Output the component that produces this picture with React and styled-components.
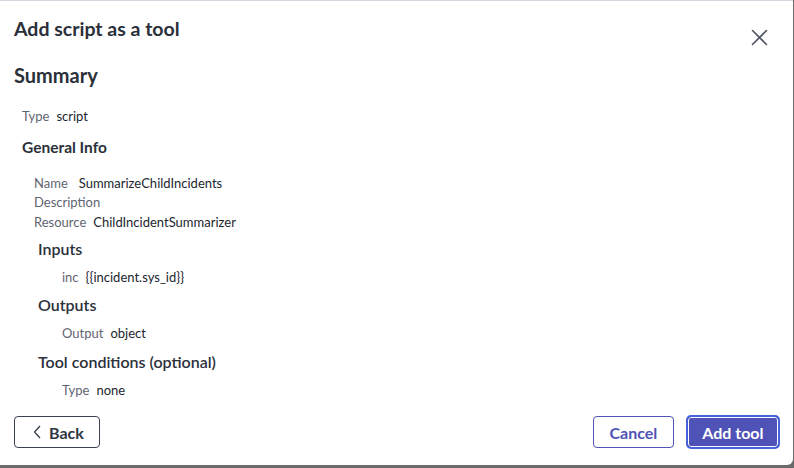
import React from "react";
import styled, { createGlobalStyle } from "styled-components";

const Global = createGlobalStyle`
  html, body { margin: 0; padding: 0; background: #6b6b6b; }
  body { font-family: Lato, "Noto Sans", sans-serif; }
  * { box-sizing: border-box; }
`;

const Backdrop = styled.div`
  width: 794px;
  height: 468px;
  background: #6b6b6b;
`;

const Dialog = styled.div`
  width: 793px;
  height: 465px;
  background: #fff;
  border-top: 1px solid #d3d6de;
  border-radius: 0 0 6px 0;
  display: flex;
  flex-direction: column;
  color: #2b303b;
`;

const Header = styled.div`
  display: flex;
  align-items: center;
  justify-content: space-between;
  padding: 13px 24px 0 14px;
  height: 41px;
`;

const Title = styled.h1`
  margin: 0;
  font-size: 19.5px;
  font-weight: 700;
  color: #2b303b;
`;

const CloseButton = styled.button`
  border: 0;
  background: none;
  padding: 0;
  width: 20px;
  height: 20px;
  display: flex;
  align-items: center;
  justify-content: center;
  margin-top: 18px;
  color: #4d5361;
`;

const Body = styled.div`
  flex: 1;
  padding: 0 14px;
`;

const Heading = styled.h2`
  margin: ${(p) => p.$mt || 0}px 0 0 ${(p) => p.$indent || 0}px;
  font-size: ${(p) => p.$size || 16}px;
  font-weight: ${(p) => p.$weight || 700};
  color: #2b303b;
  line-height: ${(p) => p.$lh || 20}px;
`;

const Row = styled.div`
  display: flex;
  gap: 7px;
  font-size: 13px;
  line-height: 19.5px;
  margin: ${(p) => p.$mt || 0}px 0 0 ${(p) => p.$indent || 0}px;
`;

const Label = styled.span`
  color: #5f6572;
  margin-right: ${(p) => p.$extra || 0}px;
`;

const Value = styled.span`
  color: #22262e;
`;

const Footer = styled.div`
  display: flex;
  align-items: center;
  padding: 0 14px 17px 14px;
  gap: 13px;
`;

const Spacer = styled.div`
  flex: 1;
`;

const Button = styled.button`
  font-family: Lato, "Noto Sans", sans-serif;
  font-size: 16px;
  font-weight: 700;
  height: 32px;
  border-radius: 4px;
  padding: 0 ${(p) => p.$pr || 15}px 0 ${(p) => p.$pl || 15}px;
  display: flex;
  align-items: center;
  gap: 7px;
  cursor: pointer;
  ${(p) =>
    p.$variant === "primary"
      ? `background: #4f52b6; color: #fff; border: 1px solid #4f52b6; box-shadow: inset 0 0 0 1px #fff; outline: 2px solid #4763dc; outline-offset: -1px;`
      : p.$variant === "secondary"
      ? `background: #fff; color: #4f52b6; border: 1px solid #4f52b6;`
      : `background: #fff; color: #2f3644; border: 1px solid #3b4352;`}
`;

const Section = styled.div``;

export default function App() {
  return (
    <Backdrop>
      <Global />
      <Dialog>
        <Header>
          <Title>Add script as a tool</Title>
          <CloseButton aria-label="Close">
            <svg width="17" height="17" viewBox="0 0 17 17">
              <path d="M1.5 1.5 L15.5 15.5 M15.5 1.5 L1.5 15.5" stroke="currentColor" strokeWidth="1.6" strokeLinecap="round" />
            </svg>
          </CloseButton>
        </Header>
        <Body>
          <Heading $size={20} $mt={20} $lh={26}>Summary</Heading>
          <Row $mt={19} $indent={8}>
            <Label>Type</Label>
            <Value>script</Value>
          </Row>
          <Heading $mt={10} $indent={8} $size={15.5}>General Info</Heading>
          <Section>
            <Row $mt={17} $indent={20}>
              <Label $extra={4}>Name</Label>
              <Value>SummarizeChildIncidents</Value>
            </Row>
            <Row $indent={20}>
              <Label>Description</Label>
            </Row>
            <Row $indent={20}>
              <Label>Resource</Label>
              <Value>ChildIncidentSummarizer</Value>
            </Row>
          </Section>
          <Heading $mt={7} $indent={24} $weight={600}>Inputs</Heading>
          <Row $mt={9} $indent={48}>
            <Label>inc</Label>
            <Value>{"{{incident.sys_id}}"}</Value>
          </Row>
          <Heading $mt={7} $indent={24} $weight={600}>Outputs</Heading>
          <Row $mt={9} $indent={48}>
            <Label>Output</Label>
            <Value>object</Value>
          </Row>
          <Heading $mt={9} $indent={24} $weight={600}>Tool conditions (optional)</Heading>
          <Row $mt={9} $indent={48}>
            <Label>Type</Label>
            <Value>none</Value>
          </Row>
        </Body>
        <Footer>
          <Button $pl={18} $pr={15}>
            <svg width="9" height="14" viewBox="0 0 9 14">
              <path d="M7 1 L1.5 7 L7 13" fill="none" stroke="currentColor" strokeWidth="1.2" />
            </svg>
            Back
          </Button>
          <Spacer />
          <Button $variant="secondary" $pl={15.5} $pr={15.5}>Cancel</Button>
          <Button $variant="primary" $pl={14.5} $pr={14.5}>Add tool</Button>
        </Footer>
      </Dialog>
    </Backdrop>
  );
}
